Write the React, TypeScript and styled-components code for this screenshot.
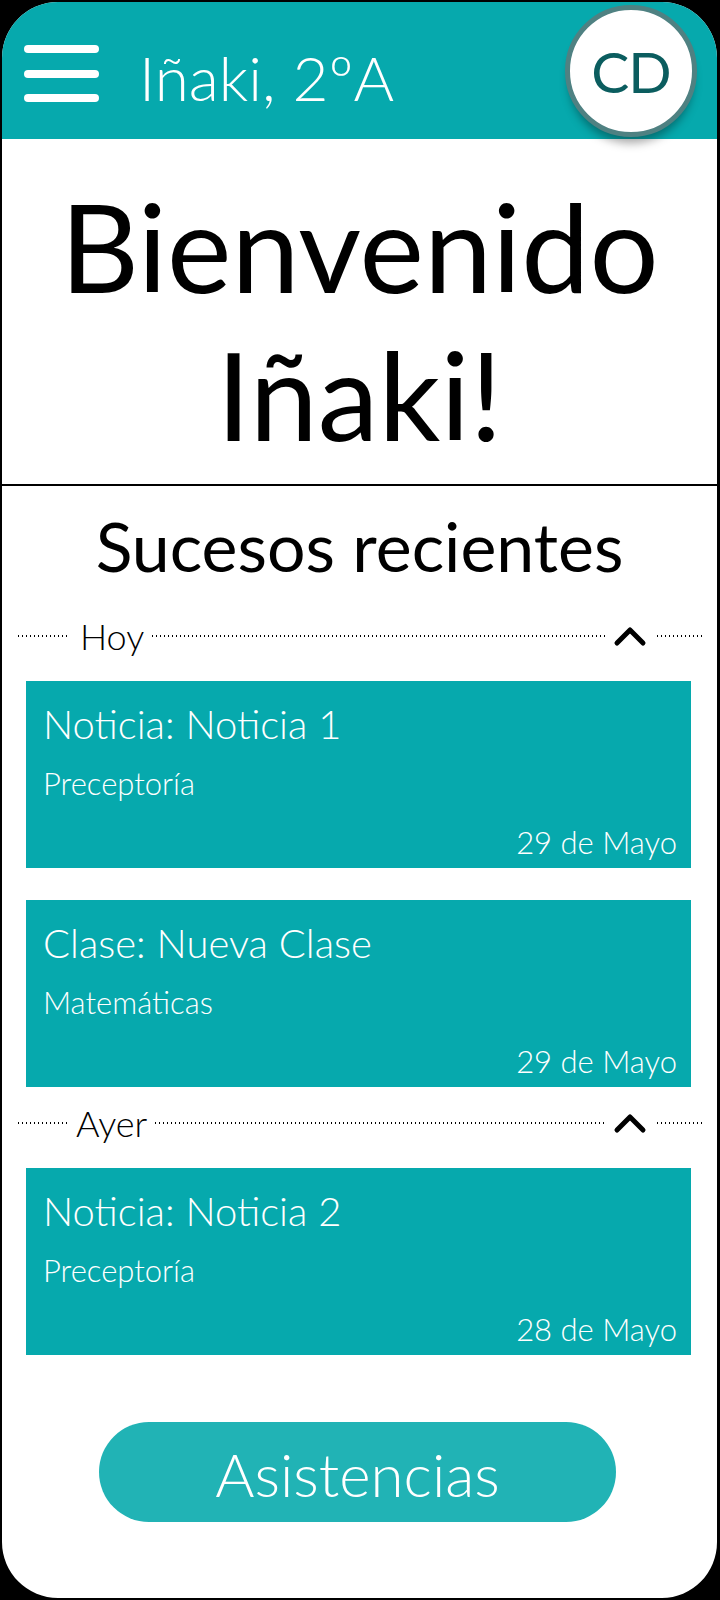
import styled, { createGlobalStyle } from "styled-components";

const GlobalStyle = createGlobalStyle`
  html, body {
    margin: 0;
    padding: 0;
    background: #000;
  }
  * {
    box-sizing: border-box;
  }
`;

const TEAL = "#06a9ad";
const FONT = `"Lato", "Noto Sans", sans-serif`;

const Phone = styled.div`
  width: 720px;
  height: 1600px;
  background: #fff;
  border: 2px solid #000;
  border-right-width: 3px;
  border-radius: 58px;
  overflow: hidden;
  display: flex;
  flex-direction: column;
  font-family: ${FONT};
`;

const Header = styled.header`
  height: 137px;
  flex-shrink: 0;
  background: ${TEAL};
  display: flex;
  align-items: center;
  padding: 0 20px 0 22px;
  position: relative;
  z-index: 1;
`;

const MenuButton = styled.div`
  width: 75px;
  display: flex;
  flex-direction: column;
  gap: 16.5px;
  margin-top: 6px;
`;

const MenuLine = styled.span`
  display: block;
  height: 8px;
  border-radius: 4px;
  background: #fff;
`;

const HeaderTitle = styled.h1`
  margin: 0 0 0 40px;
  flex: 1;
  color: #fff;
  font-weight: 300;
  font-size: 62px;
  line-height: 1;
  padding-top: 12px;
`;

const Avatar = styled.div`
  width: 132px;
  height: 132px;
  border-radius: 50%;
  background: #fff;
  border: 5px solid #4f8182;
  box-shadow: 0 10px 10px -4px rgba(0, 0, 0, 0.35);
  display: flex;
  align-items: center;
  justify-content: center;
  color: #0b5d5f;
  font-size: 57px;
  font-weight: 400;
  letter-spacing: -1px;
`;

const Welcome = styled.section`
  padding: 33px 0 16px;
  border-bottom: 2px solid #000;
  text-align: center;
  font-size: 122px;
  line-height: 148px;
  font-weight: 400;
  color: #000;
`;

const Recent = styled.section`
  flex: 1;
  display: flex;
  flex-direction: column;
`;

const RecentTitle = styled.h2`
  margin: 0;
  padding-top: 20px;
  text-align: center;
  font-size: 68px;
  line-height: 80px;
  font-weight: 400;
  color: #000;
`;

const GroupRow = styled.div<{ $top: number }>`
  display: flex;
  align-items: center;
  height: 40px;
  margin-top: ${(p) => p.$top}px;
  padding: 0 12px 0 16px;
`;

const Dots = styled.span<{ $w?: number }>`
  display: block;
  height: 1.5px;
  ${(p) => (p.$w ? `width: ${p.$w}px;` : "flex: 1;")}
  background: repeating-linear-gradient(
    to right,
    #000 0 1.5px,
    transparent 1.5px 4px
  );
`;

const GroupLabel = styled.span<{ $gap: number }>`
  font-size: 36px;
  font-weight: 300;
  line-height: 40px;
  margin: 0 8px 0 ${(p) => p.$gap}px;
  color: #000;
`;

const Chevron = styled.svg`
  width: 34px;
  height: 22px;
  margin: 0 10px 0 8px;
  flex-shrink: 0;
`;

const Card = styled.article<{ $top: number }>`
  height: 187px;
  margin: ${(p) => p.$top}px 26px 0 24px;
  background: ${TEAL};
  color: #fff;
  display: flex;
  flex-direction: column;
  padding: 20px 14px 6px 17px;
`;

const CardTitle = styled.div`
  font-size: 40px;
  font-weight: 300;
  line-height: 46px;
`;

const CardSubject = styled.div`
  margin-top: 18px;
  font-size: 31px;
  font-weight: 300;
  line-height: 36px;
`;

const CardDate = styled.div`
  margin-top: auto;
  text-align: right;
  font-size: 31px;
  font-weight: 300;
  line-height: 40px;
`;

const ActionButton = styled.button`
  align-self: center;
  margin: 67px 0 0 -4px;
  width: 517px;
  height: 100px;
  border: none;
  border-radius: 50px;
  background: #21b3b5;
  color: #fff;
  font-family: ${FONT};
  font-size: 60px;
  font-weight: 300;
  padding: 0;
  padding-top: 4px;
`;

type NewsItem = {
  title: string;
  subject: string;
  date: string;
};

type Group = {
  label: string;
  labelGap: number;
  rowTop: number;
  items: NewsItem[];
};

const groups: Group[] = [
  {
    label: "Hoy",
    labelGap: 12,
    rowTop: 30,
    items: [
      { title: "Noticia: Noticia 1", subject: "Preceptoría", date: "29 de Mayo" },
      { title: "Clase: Nueva Clase", subject: "Matemáticas", date: "29 de Mayo" },
    ],
  },
  {
    label: "Ayer",
    labelGap: 8,
    rowTop: 16,
    items: [
      { title: "Noticia: Noticia 2", subject: "Preceptoría", date: "28 de Mayo" },
    ],
  },
];

const ChevronUp = () => (
  <Chevron viewBox="0 0 34 22">
    <path
      d="M4 18 L17 5 L30 18"
      fill="none"
      stroke="#000"
      strokeWidth="5"
      strokeLinecap="round"
      strokeLinejoin="round"
    />
  </Chevron>
);

export default function App() {
  return (
    <>
      <GlobalStyle />
      <Phone>
        <Header>
          <MenuButton>
            <MenuLine />
            <MenuLine />
            <MenuLine />
          </MenuButton>
          <HeaderTitle>Iñaki, 2ºA</HeaderTitle>
          <Avatar>CD</Avatar>
        </Header>

        <Welcome>
          Bienvenido
          <br />
          Iñaki!
        </Welcome>

        <Recent>
          <RecentTitle>Sucesos recientes</RecentTitle>
          {groups.map((group) => (
            <div key={group.label}>
              <GroupRow $top={group.rowTop}>
                <Dots $w={50} />
                <GroupLabel $gap={group.labelGap}>{group.label}</GroupLabel>
                <Dots />
                <ChevronUp />
                <Dots $w={48} />
              </GroupRow>
              {group.items.map((item, i) => (
                <Card key={item.title} $top={i === 0 ? 25 : 32}>
                  <CardTitle>{item.title}</CardTitle>
                  <CardSubject>{item.subject}</CardSubject>
                  <CardDate>{item.date}</CardDate>
                </Card>
              ))}
            </div>
          ))}
          <ActionButton>Asistencias</ActionButton>
        </Recent>
      </Phone>
    </>
  );
}
